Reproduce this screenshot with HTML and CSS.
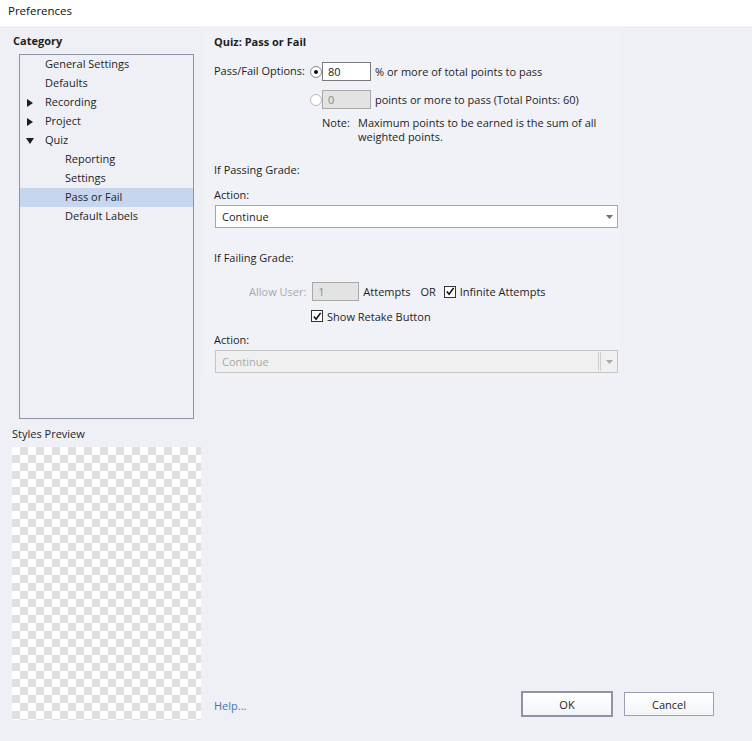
FILE: index.html
```html
<!DOCTYPE html>
<html>
<head>
<meta charset="utf-8">
<link rel="stylesheet" href="styles.css">
</head>
<body>
<div class="titlebar">Preferences</div>
<div class="main">
  <div class="left">
    <div class="cat-title">Category</div>
    <div class="tree">
      <div class="node l0">General Settings</div>
      <div class="node l0">Defaults</div>
      <div class="node l0"><span class="tw"><svg width="6" height="8" viewBox="0 0 6 8"><path d="M0 0 L6 4 L0 8 Z" fill="#1e1e1e"/></svg></span>Recording</div>
      <div class="node l0"><span class="tw"><svg width="6" height="8" viewBox="0 0 6 8"><path d="M0 0 L6 4 L0 8 Z" fill="#1e1e1e"/></svg></span>Project</div>
      <div class="node l0"><span class="tw"><svg width="8" height="6" viewBox="0 0 8 6"><path d="M0 0 L8 0 L4 6 Z" fill="#1e1e1e"/></svg></span>Quiz</div>
      <div class="node l1">Reporting</div>
      <div class="node l1">Settings</div>
      <div class="node l1 selected">Pass or Fail</div>
      <div class="node l1">Default Labels</div>
    </div>
    <div class="preview-label">Styles Preview</div>
    <div class="checker"></div>
  </div>
  <div class="right">
    <div class="panel">
      <div class="sec-title">Quiz: Pass or Fail</div>
      <div class="row opt-row">
        <span class="opt-label">Pass/Fail Options:</span>
        <span class="radio on"><span class="dot"></span></span>
        <span class="field">80</span>
        <span class="after">% or more of total points to pass</span>
      </div>
      <div class="row opt-row2">
        <span class="radio off"></span>
        <span class="field disabled">0</span>
        <span class="after">points or more to pass (Total Points: 60)</span>
      </div>
      <div class="note">
        <span class="note-k">Note:</span>
        <span class="note-v">Maximum points to be earned is the sum of all weighted points.</span>
      </div>
      <div class="label pass-grade">If Passing Grade:</div>
      <div class="label action1">Action:</div>
      <div class="select">
        <span class="sel-text">Continue</span>
        <span class="sel-arrow"><svg width="7" height="4" viewBox="0 0 7 4"><path d="M0 0 L7 0 L3.5 4 Z" fill="#6f6f6f"/></svg></span>
      </div>
      <div class="label fail-grade">If Failing Grade:</div>
      <div class="row attempts">
        <span class="muted allow">Allow User:</span>
        <span class="field disabled small">1</span>
        <span class="att">Attempts</span>
        <span class="or">OR</span>
        <span class="check"><svg width="11" height="11" viewBox="0 0 11 11"><path d="M2 5.5 L4.5 8.5 L9.5 1.5" fill="none" stroke="#111" stroke-width="1.8"/></svg></span>
        <span class="chk-text">Infinite Attempts</span>
      </div>
      <div class="row retake">
        <span class="check"><svg width="11" height="11" viewBox="0 0 11 11"><path d="M2 5.5 L4.5 8.5 L9.5 1.5" fill="none" stroke="#111" stroke-width="1.8"/></svg></span>
        <span class="chk-text">Show Retake Button</span>
      </div>
      <div class="label action2">Action:</div>
      <div class="select disabled">
        <span class="sel-text">Continue</span>
        <span class="sel-sep"></span>
        <span class="sel-arrow"><svg width="7" height="4" viewBox="0 0 7 4"><path d="M0 0 L7 0 L3.5 4 Z" fill="#a9a9a9"/></svg></span>
      </div>
    </div>
    <div class="footer">
      <span class="help">Help...</span>
      <div class="buttons">
        <span class="btn ok">OK</span>
        <span class="btn cancel">Cancel</span>
      </div>
    </div>
  </div>
</div>
</body>
</html>
```
FILE: styles.css
```css
* { box-sizing: border-box; }
html, body { margin: 0; padding: 0; }
body {
  width: 752px;
  height: 741px;
  background: #eef0f6;
  font-family: "Open Sans", "Noto Sans", sans-serif;
  font-size: 11px;
  color: #1e1e1e;
  overflow: hidden;
}
.titlebar {
  height: 26px;
  background: #ffffff;
  padding: 4px 0 0 8px;
  font-size: 11.5px;
  line-height: 14px;
  color: #111;
}
.main {
  display: flex;
  height: 715px;
}
.left {
  width: 205px;
  padding: 7px 0 0 12px;
  display: flex;
  flex-direction: column;
}
.cat-title {
  font-weight: bold;
  line-height: 16px;
  height: 16px;
  margin-left: 1px;
}
.tree {
  margin: 5px 0 0 7px;
  width: 175px;
  height: 365px;
  border: 1px solid #8e94a6;
  padding-top: 0;
}
.node {
  height: 19px;
  line-height: 15px;
  padding-bottom: 2px;
  display: flex;
  align-items: center;
  position: relative;
}
.node.l0 { padding-left: 25px; }
.node.l1 { padding-left: 45px; }
.node.selected { background: #c5d6ee; }
.tw {
  position: absolute;
  left: 5px;
  top: 0;
  height: 19px;
  width: 10px;
  display: flex;
  align-items: center;
  justify-content: center;
}
.preview-label {
  margin-top: 7px;
  line-height: 16px;
}
.checker {
  margin-top: 5px;
  width: 189px;
  height: 273px;
  background-color: #ffffff;
  background-image:
    linear-gradient(45deg, #e0e0e0 25%, transparent 25%, transparent 75%, #e0e0e0 75%),
    linear-gradient(45deg, #e0e0e0 25%, transparent 25%, transparent 75%, #e0e0e0 75%);
  background-size: 16px 16px;
  background-position: 0 0, 8px 8px;
}
.right {
  flex: 1;
  display: flex;
  flex-direction: column;
}
.panel {
  margin-top: 4px;
  width: 415px;
  height: 347px;
  background: #f0f2f7;
  padding: 4px 0 0 9px;
}
.sec-title {
  font-weight: bold;
  line-height: 16px;
}
.row { display: flex; align-items: center; }
.opt-row {
  margin-top: 12px;
  height: 19px;
}
.opt-row .opt-label { margin-top: -3px; }
.opt-row2 .after, .opt-row .after { margin-top: -1px; }
.opt-label { width: 96px; }
.radio {
  width: 12px;
  height: 12px;
  border-radius: 50%;
  border: 1px solid #8a8a8a;
  background: #fff;
  display: inline-flex;
  align-items: center;
  justify-content: center;
  margin-right: 0;
}
.radio.off { border-color: #b8b8b8; }
.radio .dot {
  width: 4px;
  height: 4px;
  border-radius: 50%;
  background: #111;
}
.field {
  width: 49px;
  height: 19px;
  border: 1px solid #7a7a7a;
  background: #fff;
  padding: 0 0 0 5px;
  line-height: 17px;
  margin-right: 4px;
}
.field.disabled {
  background: #e3e3e3;
  border-color: #a9a9a9;
  color: #8a8a8a;
}
.field.small { width: 47px; }
.opt-row2 {
  margin-top: 9px;
  height: 19px;
  padding-left: 96px;
}
.note {
  display: flex;
  margin-top: 7px;
  padding-left: 108px;
  line-height: 14px;
}
.note-k { width: 36px; }
.note-v { width: 250px; }
.label { line-height: 16px; }
.pass-grade { margin-top: 18px; }
.action1 { margin-top: 9px; }
.select {
  margin-top: 2px;
  margin-left: 1px;
  width: 403px;
  height: 23px;
  border: 1px solid #a6a6a6;
  background: #fff;
  display: flex;
  align-items: center;
  padding-left: 6px;
}
.sel-text { flex: 1; margin-top: -1px; }
.sel-arrow {
  width: 16px;
  display: flex;
  justify-content: center;
  align-items: center;
}
.select.disabled {
  background: #f0f0f0;
  border-color: #c4c4c4;
  color: #a8a8a8;
}
.sel-sep {
  width: 3px;
  height: 19px;
  border-left: 1px solid #cfcfcf;
  border-right: 1px solid #cfcfcf;
  margin-right: 0;
}
.fail-grade { margin-top: 22px; }
.attempts {
  margin-top: 16px;
  height: 19px;
  padding-left: 35px;
}
.muted { color: #a9a9a9; }
.allow { margin-right: 6px; }
.att { margin-right: 10px; }
.or { margin-right: 8px; }
.check {
  width: 12px;
  height: 12px;
  border: 1px solid #333;
  background: #fff;
  display: inline-flex;
  align-items: center;
  justify-content: center;
  margin-right: 4px;
}
.retake {
  margin-top: 7px;
  padding-left: 97px;
  height: 16px;
}
.action2 { margin-top: 8px; }
.footer {
  margin-top: auto;
  height: 54px;
  display: flex;
  align-items: flex-start;
  padding-left: 9px;
}
.help {
  color: #3d7ab8;
  margin-top: 11px;
  line-height: 16px;
}
.buttons {
  margin-left: auto;
  margin-right: 38px;
  display: flex;
  gap: 11px;
  margin-top: 4px;
}
.btn {
  display: flex;
  align-items: center;
  justify-content: center;
  background: linear-gradient(#ffffff, #f3f4f6);
  color: #1e1e1e;
}
.btn.ok {
  width: 92px;
  height: 26px;
  border: 2px solid #8d94a6;
}
.btn.cancel {
  width: 90px;
  height: 24px;
  border: 1px solid #9aa0b4;
  margin-top: 1px;
}
```
